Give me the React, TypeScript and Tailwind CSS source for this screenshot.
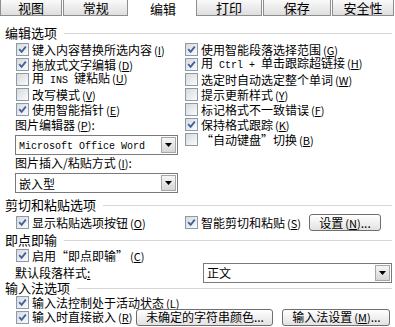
import { ReactNode } from "react";

const Key = ({ k }: { k: string }) => (
    <span className="text-[11px] ml-[2px]">(<span className="underline">{k}</span>)</span>
)

const Mono = ({ children }: { children: ReactNode }) => (
    <span className="font-['Liberation_Mono',monospace] text-[10px] whitespace-pre">{children}</span>
)

const Box = ({ on }: { on?: boolean }) => (
    <span className="w-[13px] h-[13px] shrink-0 border border-[#8b99ad] bg-gradient-to-br from-[#d9d9d9] to-[#fbfbfb] flex items-center justify-center">
        {on && (
            <svg width="9" height="9" viewBox="0 0 9 9">
                <path d="M1.2 4.2 L3.6 6.8 L7.8 1.6" stroke="#3f5f9f" strokeWidth="1.8" fill="none" />
            </svg>
        )}
    </span>
)

const Check = ({ on, label, k }: { on?: boolean, label: ReactNode, k?: string }) => (
    <div className="flex items-center h-[15px] gap-[3px] whitespace-nowrap">
        <Box on={on} />
        <span className="leading-[14px]">{label}{k && <Key k={k} />}</span>
    </div>
)

const Arrow = () => (
    <span className="w-[15px] h-[16px] mr-px border border-[#a7a7a7] bg-gradient-to-b from-[#f6f6f6] to-[#d6d6d6] flex items-center justify-center">
        <svg width="7" height="4" viewBox="0 0 7 4"><path d="M0 0 H7 L3.5 4 Z" fill="#000" /></svg>
    </span>
)

const Select = ({ value, className = "" }: { value: ReactNode, className?: string }) => (
    <div className={`h-[20px] border border-[#7a7a7a] bg-white flex items-center shrink-0 ${className}`}>
        <span className="flex-1 pl-[3px] whitespace-nowrap">{value}</span>
        <Arrow />
    </div>
)

const Btn = ({ children, className = "" }: { children: ReactNode, className?: string }) => (
    <div className={`h-[17px] border border-[#6e6e6e] rounded-[3px] bg-gradient-to-b from-white to-[#e2e2e2] flex items-center justify-center whitespace-nowrap shrink-0 leading-[14px] ${className}`}>
        {children}
    </div>
)

const Header = ({ title, h = "h-[16px]", className = "" }: { title: string, h?: string, className?: string }) => (
    <div className={`flex items-center ${h} pl-[5px] pr-[3px] ${className}`}>
        <span className="text-[13px] leading-[14px]">{title}</span>
        <span className="flex-1 h-px ml-[7px] bg-[#d6d6d6]" />
    </div>
)

const tabs = [
    { name: "视图", w: "w-[63px]" },
    { name: "常规", w: "w-[66px]" },
    { name: "编辑", w: "w-[68px]", on: true },
    { name: "打印", w: "w-[66px]" },
    { name: "保存", w: "w-[69px]" },
    { name: "安全性", w: "w-[63px]" },
]

export default function App() {
    return (
        <div className="w-[395px] h-[327px] overflow-hidden bg-white text-black text-[12px] leading-[15px] font-['Noto_Sans_CJK_SC','Noto_Sans',sans-serif]">
            <div className="flex h-[17px]">
                {tabs.map((t) => t.on ? (
                    <div key={t.name} className={`${t.w} h-[17px] bg-white flex items-center justify-center text-[13px] leading-[14px] pt-px`}>{t.name}</div>
                ) : (
                    <div key={t.name} className={`${t.w} h-[16px] mr-px border-x border-b border-[#8e8e8e] bg-gradient-to-b from-[#fafafa] to-[#dedede] flex items-center justify-center text-[13px] leading-[14px] pt-px`}>{t.name}</div>
                ))}
            </div>

            <Header title="编辑选项" className="mt-[8px]" />
            <div className="flex mt-px">
                <div className="w-[185px] pl-[16px] flex flex-col">
                    <Check on label="键入内容替换所选内容" k="I" />
                    <Check on label="拖放式文字编辑" k="D" />
                    <Check label={<>用<Mono> INS </Mono>键粘贴</>} k="U" />
                    <Check label="改写模式" k="V" />
                    <Check on label="使用智能指针" k="E" />
                    <div className="h-[15px] mt-px -ml-px leading-[14px]">图片编辑器<Key k="P" />:</div>
                    <Select className="mt-[2px] w-[163px] -ml-px" value={<Mono>Microsoft Office Word</Mono>} />
                    <div className="h-[15px] mt-px -ml-px leading-[14px]">图片插入/粘贴方式<Key k="I" />:</div>
                    <Select className="mt-[2px] w-[163px] -ml-px" value="嵌入型" />
                </div>
                <div className="flex flex-col">
                    <Check on label="使用智能段落选择范围" k="G" />
                    <Check on label={<>用<Mono> Ctrl + </Mono>单击跟踪超链接</>} k="H" />
                    <Check label="选定时自动选定整个单词" k="W" />
                    <Check label="提示更新样式" k="Y" />
                    <Check label="标记格式不一致错误" k="F" />
                    <Check on label="保持格式跟踪" k="K" />
                    <Check label="“自动键盘”切换" k="B" />
                </div>
            </div>

            <Header title="剪切和粘贴选项" className="mt-[4px]" />
            <div className="flex items-center h-[17px] mt-px">
                <div className="w-[185px] pl-[16px]"><Check on label="显示粘贴选项按钮" k="O" /></div>
                <Check on label="智能剪切和粘贴" k="S" />
                <Btn className="ml-[8px] w-[72px]">设置<Key k="N" />...</Btn>
            </div>

            <Header title="即点即输" className="mt-px" />
            <div className="pl-[16px]"><Check on label="启用“即点即输”" k="C" /></div>
            <div className="flex items-center h-[17px] mt-[1px] pl-[15px]">
                <span className="w-[188px] leading-[14px]">默认段落样式<span className="underline">:</span></span>
                <Select className="w-[189px]" value="正文" />
            </div>

            <Header title="输入法选项" h="h-[14px]" />
            <div className="pl-[16px]"><Check on label="输入法控制处于活动状态" k="L" /></div>
            <div className="flex items-center h-[16px] -mt-px pl-[16px]">
                <Check on label="输入时直接嵌入" k="R" />
                <Btn className="ml-[4px] w-[137px]">未确定的字符串颜色...</Btn>
                <Btn className="ml-[9px] w-[108px]">输入法设置<Key k="M" />...</Btn>
            </div>
        </div>
    );
}
